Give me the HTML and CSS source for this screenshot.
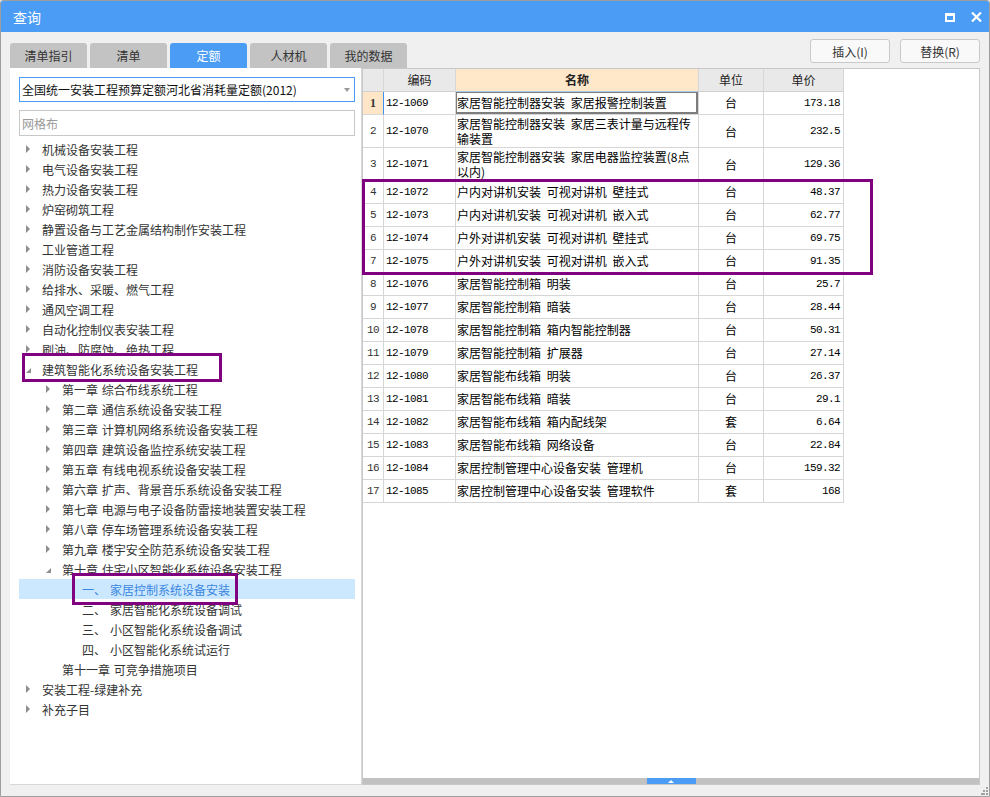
FILE: index.html
```html
<!DOCTYPE html>
<html lang="zh-CN">
<head>
<meta charset="utf-8">
<title>查询</title>
<link rel="stylesheet" href="styles.css">
</head>
<body>
<div class="window">
  <div class="titlebar">
    <span class="title">查询</span>
    <div class="winbtns">
      <svg class="ico" width="10" height="9" viewBox="0 0 10 9"><path d="M0 0H10V9H0Z M2 3V7H8V3Z" fill="#fff" fill-rule="evenodd"/></svg>
      <svg class="ico" width="11" height="10" viewBox="0 0 11 10"><path d="M1 0.5L10 9.5M10 0.5L1 9.5" stroke="#fff" stroke-width="2.2"/></svg>
    </div>
  </div>

  <div class="topbar">
    <div class="tabs">
      <div class="tab">清单指引</div>
      <div class="tab">清单</div>
      <div class="tab active">定额</div>
      <div class="tab">人材机</div>
      <div class="tab">我的数据</div>
    </div>
    <div class="actions">
      <button class="btn">插入(I)</button>
      <button class="btn">替换(R)</button>
    </div>
  </div>

  <div class="content">
    <div class="left">
      <div class="select"><span>全国统一安装工程预算定额河北省消耗量定额(2012)</span><span class="caret"></span></div>
      <input class="search" type="text" placeholder="网格布">
      <div class="tree">
        <div class="node l1"><span class="tw closed"></span>机械设备安装工程</div>
        <div class="node l1"><span class="tw closed"></span>电气设备安装工程</div>
        <div class="node l1"><span class="tw closed"></span>热力设备安装工程</div>
        <div class="node l1"><span class="tw closed"></span>炉窑砌筑工程</div>
        <div class="node l1"><span class="tw closed"></span>静置设备与工艺金属结构制作安装工程</div>
        <div class="node l1"><span class="tw closed"></span>工业管道工程</div>
        <div class="node l1"><span class="tw closed"></span>消防设备安装工程</div>
        <div class="node l1"><span class="tw closed"></span>给排水、采暖、燃气工程</div>
        <div class="node l1"><span class="tw closed"></span>通风空调工程</div>
        <div class="node l1"><span class="tw closed"></span>自动化控制仪表安装工程</div>
        <div class="node l1"><span class="tw closed"></span>刷油、防腐蚀、绝热工程</div>
        <div class="node l1"><span class="tw open"></span>建筑智能化系统设备安装工程</div>
        <div class="node l2"><span class="tw closed"></span>第一章 综合布线系统工程</div>
        <div class="node l2"><span class="tw closed"></span>第二章 通信系统设备安装工程</div>
        <div class="node l2"><span class="tw closed"></span>第三章 计算机网络系统设备安装工程</div>
        <div class="node l2"><span class="tw closed"></span>第四章 建筑设备监控系统安装工程</div>
        <div class="node l2"><span class="tw closed"></span>第五章 有线电视系统设备安装工程</div>
        <div class="node l2"><span class="tw closed"></span>第六章 扩声、背景音乐系统设备安装工程</div>
        <div class="node l2"><span class="tw closed"></span>第七章 电源与电子设备防雷接地装置安装工程</div>
        <div class="node l2"><span class="tw closed"></span>第八章 停车场管理系统设备安装工程</div>
        <div class="node l2"><span class="tw closed"></span>第九章 楼宇安全防范系统设备安装工程</div>
        <div class="node l2"><span class="tw open"></span>第十章 住宅小区智能化系统设备安装工程</div>
        <div class="node l3 sel"><span class="tw"></span><span class="ord">一、</span>家居控制系统设备安装</div>
        <div class="node l3"><span class="tw"></span><span class="ord">二、</span>家居智能化系统设备调试</div>
        <div class="node l3"><span class="tw"></span><span class="ord">三、</span>小区智能化系统设备调试</div>
        <div class="node l3"><span class="tw"></span><span class="ord">四、</span>小区智能化系统试运行</div>
        <div class="node l2"><span class="tw"></span>第十一章 可竞争措施项目</div>
        <div class="node l1"><span class="tw closed"></span>安装工程-绿建补充</div>
        <div class="node l1"><span class="tw closed"></span>补充子目</div>
      </div>
    </div>

    <div class="right">
      <div class="grid-wrap">
        <table class="grid">
          <colgroup>
            <col class="c-rn"><col class="c-code"><col class="c-name"><col class="c-unit"><col class="c-price">
          </colgroup>
          <thead>
            <tr><th class="rn"></th><th>编码</th><th class="hname">名称</th><th>单位</th><th>单价</th></tr>
          </thead>
          <tbody>
            <tr class="cur"><td class="rn">1</td><td class="code">12-1069</td><td class="name">家居智能控制器安装 家居报警控制装置</td><td class="unit">台</td><td class="num">173.18</td></tr>
            <tr class="tall"><td class="rn">2</td><td class="code">12-1070</td><td class="name">家居智能控制器安装 家居三表计量与远程传输装置</td><td class="unit">台</td><td class="num">232.5</td></tr>
            <tr class="tall"><td class="rn">3</td><td class="code">12-1071</td><td class="name">家居智能控制器安装 家居电器监控装置(8点以内)</td><td class="unit">台</td><td class="num">129.36</td></tr>
            <tr><td class="rn">4</td><td class="code">12-1072</td><td class="name">户内对讲机安装 可视对讲机 壁挂式</td><td class="unit">台</td><td class="num">48.37</td></tr>
            <tr><td class="rn">5</td><td class="code">12-1073</td><td class="name">户内对讲机安装 可视对讲机 嵌入式</td><td class="unit">台</td><td class="num">62.77</td></tr>
            <tr><td class="rn">6</td><td class="code">12-1074</td><td class="name">户外对讲机安装 可视对讲机 壁挂式</td><td class="unit">台</td><td class="num">69.75</td></tr>
            <tr><td class="rn">7</td><td class="code">12-1075</td><td class="name">户外对讲机安装 可视对讲机 嵌入式</td><td class="unit">台</td><td class="num">91.35</td></tr>
            <tr><td class="rn">8</td><td class="code">12-1076</td><td class="name">家居智能控制箱 明装</td><td class="unit">台</td><td class="num">25.7</td></tr>
            <tr><td class="rn">9</td><td class="code">12-1077</td><td class="name">家居智能控制箱 暗装</td><td class="unit">台</td><td class="num">28.44</td></tr>
            <tr><td class="rn">10</td><td class="code">12-1078</td><td class="name">家居智能控制箱 箱内智能控制器</td><td class="unit">台</td><td class="num">50.31</td></tr>
            <tr><td class="rn">11</td><td class="code">12-1079</td><td class="name">家居智能控制箱 扩展器</td><td class="unit">台</td><td class="num">27.14</td></tr>
            <tr><td class="rn">12</td><td class="code">12-1080</td><td class="name">家居智能布线箱 明装</td><td class="unit">台</td><td class="num">26.37</td></tr>
            <tr><td class="rn">13</td><td class="code">12-1081</td><td class="name">家居智能布线箱 暗装</td><td class="unit">台</td><td class="num">29.1</td></tr>
            <tr><td class="rn">14</td><td class="code">12-1082</td><td class="name">家居智能布线箱 箱内配线架</td><td class="unit">套</td><td class="num">6.64</td></tr>
            <tr><td class="rn">15</td><td class="code">12-1083</td><td class="name">家居智能布线箱 网络设备</td><td class="unit">台</td><td class="num">22.84</td></tr>
            <tr><td class="rn">16</td><td class="code">12-1084</td><td class="name">家居控制管理中心设备安装 管理机</td><td class="unit">台</td><td class="num">159.32</td></tr>
            <tr><td class="rn">17</td><td class="code">12-1085</td><td class="name">家居控制管理中心设备安装 管理软件</td><td class="unit">套</td><td class="num">168</td></tr>
          </tbody>
        </table>
      </div>
      <div class="hscroll"><div class="thumb"><span class="up"></span></div></div>
    </div>
  </div>

  <div class="statusbar">
    <svg class="grip" width="7" height="8" viewBox="0 0 7 8">
      <rect x="5" y="0" width="2" height="2" fill="#a0a0a0"/>
      <rect x="2" y="3" width="2" height="2" fill="#a0a0a0"/>
      <rect x="5" y="3" width="2" height="2" fill="#a0a0a0"/>
      <rect x="0" y="6" width="2" height="2" fill="#a0a0a0"/>
      <rect x="2" y="6" width="2" height="2" fill="#a0a0a0"/>
      <rect x="5" y="6" width="2" height="2" fill="#a0a0a0"/>
    </svg>
  </div>

  <div class="mark mark-tree"></div>
  <div class="mark mark-item"></div>
  <div class="mark mark-rows"></div>
</div>
</body>
</html>
```

FILE: styles.css
```css
* { box-sizing: border-box; }
html, body { margin: 0; padding: 0; }
body {
  width: 990px;
  height: 797px;
  overflow: hidden;
  background: #f0f0f0;
  font-family: "Noto Sans CJK SC", "Noto Sans", sans-serif;
  font-size: 12px;
  color: #333;
}

.window {
  position: relative;
  width: 990px;
  height: 797px;
  border: 1px solid #9e9e9e;
  border-radius: 3px 3px 0 0;
  background: #f0f0f0;
  display: flex;
  flex-direction: column;
  overflow: hidden;
}

/* title bar */
.titlebar {
  height: 31px;
  flex: none;
  background: #4a9cf5;
  display: flex;
  align-items: center;
  justify-content: space-between;
  padding: 0 7px 0 12px;
}
.title { color: #fff; font-size: 14px; line-height: 1; }
.winbtns { display: flex; align-items: center; gap: 16px; padding-top: 1px; }
.ico { display: block; }

/* tabs + buttons */
.topbar {
  height: 36px;
  flex: none;
  display: flex;
  justify-content: space-between;
  padding: 0 9px;
}
.tabs { display: flex; gap: 3px; align-self: flex-end; }
.tab {
  width: 77px;
  height: 25px;
  background: #c3c3c3;
  border-radius: 3px 3px 0 0;
  display: flex;
  align-items: center;
  justify-content: center;
  color: #333;
  font-size: 12px;
}
.tab.active { background: #4a9cf5; color: #fff; }
.actions { display: flex; gap: 10px; padding-top: 7px; }
.btn {
  width: 80px;
  height: 24px;
  padding: 0;
  border: 1px solid #c9c9c9;
  border-radius: 3px;
  background: #f9f9f9;
  color: #333;
  font-family: "Noto Sans CJK SC", sans-serif;
  font-size: 12px;
}

/* content */
.content {
  height: 717px;
  flex: none;
  display: flex;
  padding: 0 9px;
}
.left {
  width: 352px;
  flex: none;
  background: #fff;
  border-right: 1px solid #d8d8d8;
  border-bottom: 1px solid #d8d8d8;
  padding: 9px 6px 0 9px;
}
.select {
  height: 25px;
  border: 1px solid #4a9cf5;
  display: flex;
  align-items: center;
  justify-content: space-between;
  padding: 0 4px 0 2px;
  color: #111;
  white-space: nowrap;
}
.caret {
  width: 0;
  height: 0;
  border-top: 4px solid #9a9a9a;
  border-left: 3.5px solid transparent;
  border-right: 3.5px solid transparent;
}
.search {
  display: block;
  width: 100%;
  height: 26px;
  margin: 8px 0 0;
  border: 1px solid #c8c8c8;
  padding: 0 2px;
  font-family: "Noto Sans CJK SC", sans-serif;
  font-size: 12px;
  color: #333;
  outline: none;
}
.search::placeholder { color: #9a9a9a; }

.tree { margin-top: 3px; word-spacing: 1px; }
.node {
  height: 20px;
  display: flex;
  align-items: center;
  white-space: nowrap;
  color: #333;
}
.node.l2 { padding-left: 20px; }
.node.l3 { padding-left: 40px; }
.node.sel { background: #cce8ff; color: #3a86e0; }
.tw {
  width: 19px;
  height: 20px;
  flex: none;
  margin-left: 4px;
  padding-left: 3px;
  display: flex;
  align-items: center;
}
.tw.closed::before {
  content: "";
  width: 0;
  height: 0;
  border-left: 4px solid #8e8e8e;
  border-top: 4px solid transparent;
  border-bottom: 4px solid transparent;
}
.tw.open::before {
  content: "";
  width: 0;
  height: 0;
  margin-top: 3px;
  border-bottom: 5px solid #8e8e8e;
  border-left: 5px solid transparent;
}
.ord { margin-right: 4px; }

/* grid */
.right {
  width: 618px;
  flex: none;
  background: #fff;
  border: 1px solid #c8c8c8;
  display: flex;
  flex-direction: column;
}
.grid-wrap { flex: 1; overflow: hidden; }
.grid {
  border-collapse: separate;
  border-spacing: 0;
  table-layout: fixed;
  width: 481px;
  color: #000;
}
.c-rn { width: 21px; }
.c-code { width: 72px; }
.c-name { width: 243px; }
.c-unit { width: 65px; }
.c-price { width: 80px; }
.grid th, .grid td {
  border-right: 1px solid #d6d6d6;
  border-bottom: 1px solid #d6d6d6;
  height: 23px;
  padding: 0 2px;
  line-height: 14px;
  font-weight: normal;
  overflow: hidden;
}
.grid th {
  background: #e9e9e9;
  color: #222;
  text-align: center;
  border-bottom-color: #d0d0d0;
}
.grid th.hname {
  background: #fee8c9;
  font-weight: bold;
  border-bottom-color: #a9c8ee;
}
.grid tr.tall td { height: 33px; line-height: 15px; }
.grid .rn {
  text-align: center;
  padding: 0;
  font-family: "Liberation Mono", monospace;
  font-size: 11px;
  letter-spacing: -0.6px;
  color: #333;
}
.grid .code {
  font-family: "Liberation Mono", monospace;
  font-size: 11px;
  letter-spacing: -0.6px;
  padding-left: 2px;
}
.grid .name { word-spacing: 3px; padding-left: 1px; }
.grid .unit { text-align: center; }
.grid .num {
  text-align: right;
  font-family: "Liberation Mono", monospace;
  font-size: 11px;
  letter-spacing: -0.6px;
  padding-right: 3px;
}
.grid tr.cur .rn {
  background: #fee6c6;
  font-family: "Liberation Serif", serif;
  font-weight: bold;
  font-size: 12px;
  letter-spacing: 0;
  border-right-color: #3d8ff0;
}
.grid tr.cur .name {
  box-shadow: inset 1px 1px 0 #7d7d7d, inset -2px -2px 0 #7d7d7d;
}

.hscroll {
  height: 6px;
  flex: none;
  background: #c1c1c1;
  display: flex;
  justify-content: center;
}
.thumb {
  width: 49px;
  height: 6px;
  background: #4a9cf5;
  display: flex;
  align-items: center;
  justify-content: center;
}
.up {
  width: 0;
  height: 0;
  border-bottom: 3px solid #fff;
  border-left: 3px solid transparent;
  border-right: 3px solid transparent;
}

.statusbar { height: 11px; flex: none; position: relative; }
.grip { position: absolute; right: 1px; bottom: 1px; }

/* annotation boxes drawn over the UI */
.mark { position: absolute; border: 3px solid #800080; pointer-events: none; }
.mark-tree { left: 21px; top: 352px; width: 200px; height: 29px; }
.mark-item { left: 71px; top: 572px; width: 166px; height: 32px; }
.mark-rows { left: 361px; top: 178px; width: 511px; height: 96px; }
```
